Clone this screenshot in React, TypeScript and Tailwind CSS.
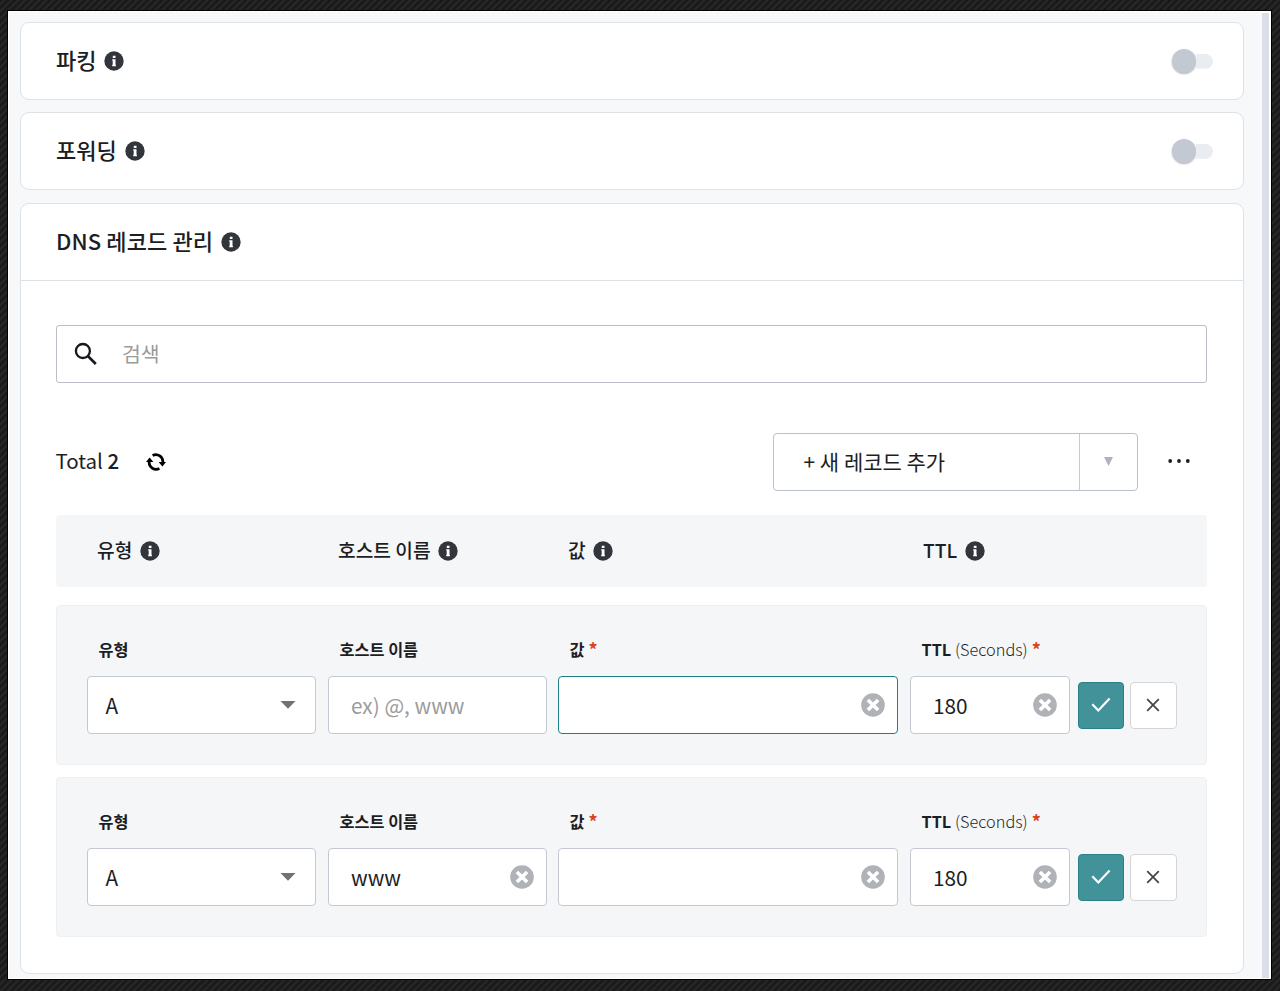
import type { ReactNode } from 'react'

interface DnsRecord {
  id: number
  type: string
  host: string
  value: string
  ttl: string
  active?: boolean
}

const RECORDS: DnsRecord[] = [
  { id: 1, type: 'A', host: '', value: '', ttl: '180', active: true },
  { id: 2, type: 'A', host: 'www', value: '', ttl: '180' },
]

function InfoIcon() {
  return (
    <svg viewBox="0 0 20 20" className="h-5 w-5 shrink-0">
      <circle cx="10" cy="10" r="9.7" fill="#32363c" />
      <path d="M8.8 4.8h2.7v2.2H8.8zM8.2 8.2h3.3v5.6h.4v1.4H8.2v-1.4h.5V9.6h-.5z" fill="#fff" />
    </svg>
  )
}

function SearchIcon() {
  return (
    <svg viewBox="0 0 24 24" className="h-6 w-6" fill="none" stroke="#17191d">
      <circle cx="8.9" cy="9" r="7" strokeWidth="2.3" />
      <path d="M13.8 14l8 8" strokeWidth="2.7" />
    </svg>
  )
}

function RefreshIcon() {
  return (
    <svg viewBox="0 0 20 18" className="h-[18px] w-5">
      <path d="M6.6 2.5A7 7 0 0 1 16.8 9.5M13.4 15.5A7 7 0 0 1 3.2 8.5" fill="none" stroke="#000" strokeWidth="2.7" />
      <path d="M12.6 8.9H20l-3.6 4.6zM0 9.1h7.4L3.6 4.5z" fill="#000" />
    </svg>
  )
}

function ClearIcon() {
  return (
    <svg viewBox="0 0 24 24" className="h-6 w-6 shrink-0">
      <circle cx="12" cy="12" r="11.8" fill="#afb2b6" />
      <path d="M6.9 6.9l10.2 10.2M17.1 6.9L6.9 17.1" stroke="#fff" strokeWidth="3.6" />
    </svg>
  )
}

function Toggle() {
  return (
    <div className="flex h-6 w-[41px] items-center">
      <span className="h-6 w-6 shrink-0 rounded-full bg-[#c3c9d2] shadow-[0_1px_2px_rgba(0,0,0,0.3)]" />
      <span className="-ml-2 h-[15px] w-[25px] rounded-r-full bg-[#e9ecf1] [clip-path:inset(0_0_0_8px)]" />
    </div>
  )
}

function CardTitle({ children, className = '' }: { children: ReactNode; className?: string }) {
  return (
    <h2 className="flex items-center gap-2 text-[22px] leading-8 font-medium">
      <span className={`-mt-[4px] ${className}`}>{children}</span>
      <InfoIcon />
    </h2>
  )
}

function ToggleCard({ title }: { title: string }) {
  return (
    <section className="flex h-[78px] shrink-0 items-center justify-between rounded-[9px] border-[1.5px] border-[#dde2e7] bg-white pr-[29.5px] pl-[35.5px]">
      <CardTitle>{title}</CardTitle>
      <Toggle />
    </section>
  )
}

function HeaderCell({ label, className }: { label: string; className: string }) {
  return (
    <div className={`flex items-center gap-[7.5px] text-[19.2px] font-medium ${className}`}>
      <span>{label}</span>
      <InfoIcon />
    </div>
  )
}

function Field({ label, required, className, children }: {
  label: ReactNode
  required?: boolean
  className: string
  children: ReactNode
}) {
  return (
    <div className={className}>
      <div className="flex h-6 items-center gap-1 pl-[12px] text-[16.3px] font-bold whitespace-nowrap">
        {label}
        {required && <span className="mt-px text-[18px] text-[#d9431e]">*</span>}
      </div>
      <div className="mt-[14.5px]">{children}</div>
    </div>
  )
}

function Input({ value, placeholder, active, clearable }: {
  value: string
  placeholder?: string
  active?: boolean
  clearable?: boolean
}) {
  return (
    <div className={`flex h-[58px] items-center justify-between rounded-[4px] border-[1.5px] bg-white pr-[12px] pl-[22.5px] text-[20.8px] ${active ? 'border-[#1c7f87]' : 'border-[#c3c8d3]'}`}>
      <span className={value ? 'mt-px' : 'mt-px text-[#9b9b9b]'}>{value || placeholder}</span>
      {clearable && <ClearIcon />}
    </div>
  )
}

function RecordRow({ record }: { record: DnsRecord }) {
  return (
    <div className="flex h-[160.5px] items-start rounded-[4px] border border-[#eff0f1] bg-[#f5f6f8] pt-[31.5px] pl-[30px]">
      <Field label="유형" className="w-[229px]">
        <div className="flex h-[58px] items-center justify-between rounded-[4px] border-[1.5px] border-[#c3c8d3] bg-white pr-[19px] pl-[18px] text-[20.8px]">
          <span className="mt-px">{record.type}</span>
          <svg viewBox="0 0 16 8" className="h-2 w-4">
            <path d="M.5 0h15L8 7.8z" fill="#727272" />
          </svg>
        </div>
      </Field>
      <Field label="호스트 이름" className="ml-3 w-[219px]">
        <Input value={record.host} placeholder="ex) @, www" clearable={record.host !== ''} />
      </Field>
      <Field label="값" required className="ml-[11px] w-[340px]">
        <Input value={record.value} active={record.active} clearable />
      </Field>
      <Field label={<span>TTL <span className="font-light">(Seconds)</span></span>} required className="ml-3 w-[160px]">
        <Input value={record.ttl} clearable />
      </Field>
      <button className="mt-[44.5px] ml-2 flex h-[47px] w-[46.5px] items-center justify-center rounded-[4px] border border-[#2b8088] bg-[#42929a]">
        <svg viewBox="0 0 20 16" className="h-4 w-5" fill="none" stroke="#fff" strokeWidth="2.2">
          <path d="M1.3 7.2l6 6.2L18.6 1.6" />
        </svg>
      </button>
      <button className="mt-[44.5px] ml-[5.5px] flex h-[47px] w-[47px] items-center justify-center rounded-[4px] border-[1.5px] border-[#d5d5d8] bg-white">
        <svg viewBox="0 0 14 14" className="h-[14px] w-[14px]" fill="none" stroke="#444" strokeWidth="1.7">
          <path d="M1.2 1.2l11.6 11.6M12.8 1.2L1.2 12.8" />
        </svg>
      </button>
    </div>
  )
}

export default function App() {
  return (
    <div className="h-[991px] w-[1280px] overflow-hidden bg-[repeating-linear-gradient(135deg,#191919_0px,#1b1b1b_1.6px,#2b2b2b_3.2px,#191919_4.95px)] pt-[10px] pr-[8px] pl-[7px] font-['Noto_Sans_CJK_KR',sans-serif] text-[#1c1e24]">
      <div className="flex h-[970px] border border-black bg-white p-px">
        <main className="flex flex-1 flex-col gap-[12.3px] bg-[#f7f8fa] pt-[10px] pr-[18.5px] pl-[10.5px]">
          <ToggleCard title="파킹" />
          <ToggleCard title="포워딩" />
          <section className="h-[771px] shrink-0 rounded-[9px] border-[1.5px] border-[#dde2e7] bg-white">
            <div className="flex h-[77px] items-center border-b-[1.5px] border-[#dde2e7] pl-[35.5px]">
              <CardTitle className="tracking-[0.12px]">DNS 레코드 관리</CardTitle>
            </div>
            <div className="pr-[35.5px] pl-[35px] pt-[44px]">
              <div className="flex h-[58px] items-center rounded-[3px] border-[1.5px] border-[#b9bec9] pl-[17px] text-[20.5px]">
                <SearchIcon />
                <span className="-mt-px ml-[24.5px] text-[#9b9b9b]">검색</span>
              </div>

              <div className="mt-[50px] flex h-[58px] items-center">
                <span className="-mt-[3px] text-[20.5px]">Total <b className="font-medium">2</b></span>
                <span className="ml-[27px]"><RefreshIcon /></span>
                <div className="ml-auto flex h-[58px] w-[364.5px] rounded-[4px] border-[1.5px] border-[#b9c0cc] text-[21px]">
                  <span className="flex flex-1 items-center pl-[29.5px]">+ 새 레코드 추가</span>
                  <span className="flex w-[57.5px] items-center justify-center border-l-[1.5px] border-[#c5cad4]">
                    <svg viewBox="0 0 9 9" className="h-[9px] w-[9px]">
                      <path d="M0 0h9L4.5 9z" fill="#b3b0c6" />
                    </svg>
                  </span>
                </div>
                <svg viewBox="0 0 22 4" className="-mt-[2px] mr-[17.5px] ml-[30px] h-1 w-[22px]" fill="#1c1e24">
                  <circle cx="2.2" cy="2" r="1.9" />
                  <circle cx="11" cy="2" r="1.9" />
                  <circle cx="19.8" cy="2" r="1.9" />
                </svg>
              </div>

              <div className="mt-[24px] flex h-[72px] items-center rounded-[4px] bg-[#f5f6f8] pl-[41.5px]">
                <HeaderCell label="유형" className="w-[241px]" />
                <HeaderCell label="호스트 이름" className="w-[230px]" />
                <HeaderCell label="값" className="w-[355px]" />
                <HeaderCell label="TTL" className="w-[100px]" />
              </div>

              <div className="mt-[18px] flex flex-col gap-[11.5px]">
                {RECORDS.map((record) => (
                  <RecordRow key={record.id} record={record} />
                ))}
              </div>
            </div>
          </section>
        </main>
        <div className="mt-px mr-px w-[7px] bg-[#dbdee6]" />
      </div>
    </div>
  )
}
